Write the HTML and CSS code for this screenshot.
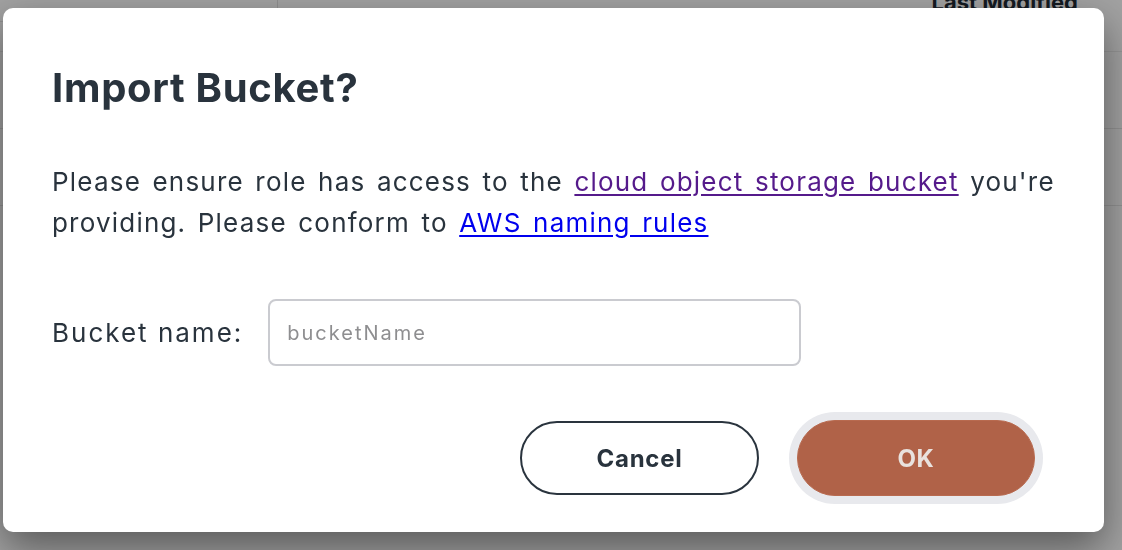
FILE: index.html
```html
<!DOCTYPE html>
<html>
<head>
<meta charset="utf-8">
<link rel="stylesheet" href="styles.css">
</head>
<body>
<div class="page">
  <div class="topbar">
    <div class="sidebar-head"></div>
    <div class="topbar-right"><span class="col-head">Last Modified</span></div>
  </div>
  <div class="row"></div>
  <div class="row"></div>
</div>
<div class="overlay"></div>
<div class="modal" role="dialog">
  <h2 class="title">Import Bucket?</h2>
  <p class="desc">Please ensure role has access to the <a class="link visited" href="#">cloud object storage bucket</a> you're providing. Please conform to <a class="link" href="#">AWS naming rules</a></p>
  <div class="field">
    <label class="label" for="bucket">Bucket name:</label>
    <input class="input" id="bucket" type="text" placeholder="bucketName">
  </div>
  <div class="actions">
    <button class="btn btn-cancel">Cancel</button>
    <button class="btn btn-ok">OK</button>
  </div>
</div>
</body>
</html>
```
FILE: styles.css
```css
html, body {
  margin: 0;
  padding: 0;
  height: 100%;
  overflow: hidden;
}
body {
  background: #ffffff;
  font-family: "Inter", "Open Sans", sans-serif;
  color: #29333d;
}
.page {
  height: 550px;
}
.topbar {
  display: flex;
  height: 52px;
  border-bottom: 1px solid #ececec;
  box-sizing: border-box;
}
.sidebar-head {
  width: 278px;
  height: 22px;
  border-right: 1px solid #e2e2e2;
  border-bottom: 1px solid #e6e6e6;
  box-sizing: border-box;
}
.topbar-right {
  flex: 1;
  display: flex;
  justify-content: flex-end;
  padding-right: 44px;
}
.col-head {
  font-weight: 700;
  font-size: 22px;
  line-height: 1;
  margin-top: -9px;
  color: #1f2a35;
}
.row {
  height: 76px;
  border-bottom: 1px solid #e6e6e6;
}
.overlay {
  position: fixed;
  inset: 0;
  background: rgba(0, 0, 0, 0.37);
}
.modal {
  position: fixed;
  left: 3px;
  top: 8px;
  width: 1101px;
  height: 524px;
  box-sizing: border-box;
  background: #ffffff;
  border-radius: 10px;
  box-shadow: 0 16px 40px rgba(0, 0, 0, 0.45);
  padding: 55px 40px 0 49px;
}
.title {
  margin: 0;
  font-size: 40px;
  line-height: 50px;
  letter-spacing: 0.7px;
  font-weight: 700;
  color: #29333d;
}
.desc {
  margin: 48px 0 0 0;
  font-size: 26px;
  line-height: 41px;
  letter-spacing: 1.2px;
  word-spacing: 3px;
  color: #29333d;
}
.link {
  color: #0000ee;
  text-decoration: underline;
  text-underline-offset: 3px;
}
.link.visited {
  color: #551a8b;
}
.field {
  display: flex;
  align-items: center;
  gap: 25px;
  margin-top: 56px;
}
.label {
  font-size: 26px;
  letter-spacing: 2px;
  color: #29333d;
}
.input {
  width: 533px;
  height: 67px;
  box-sizing: border-box;
  border: 2px solid #cacbd0;
  border-radius: 8px;
  padding: 0 17px;
  font-family: inherit;
  font-size: 20px;
  letter-spacing: 2px;
  color: #29333d;
  outline: none;
}
.input::placeholder {
  color: #8e8e90;
}
.actions {
  display: flex;
  justify-content: flex-end;
  align-items: center;
  gap: 38px;
  margin-top: 54px;
  padding-right: 29px;
}
.btn {
  height: 74px;
  width: 239px;
  border-radius: 37px;
  font-family: inherit;
  font-size: 24px;
  letter-spacing: 0.7px;
  font-weight: 700;
  cursor: pointer;
  box-sizing: border-box;
}
.btn-cancel {
  background: #ffffff;
  border: 2px solid #2a343e;
  color: #29333d;
}
.btn-ok {
  width: 238px;
  height: 76px;
  border-radius: 38px;
  background: #b06248;
  border: 1px solid #b86a4f;
  color: #e9e2de;
  box-shadow: 0 0 0 8px #e8e9ed;
}
```
